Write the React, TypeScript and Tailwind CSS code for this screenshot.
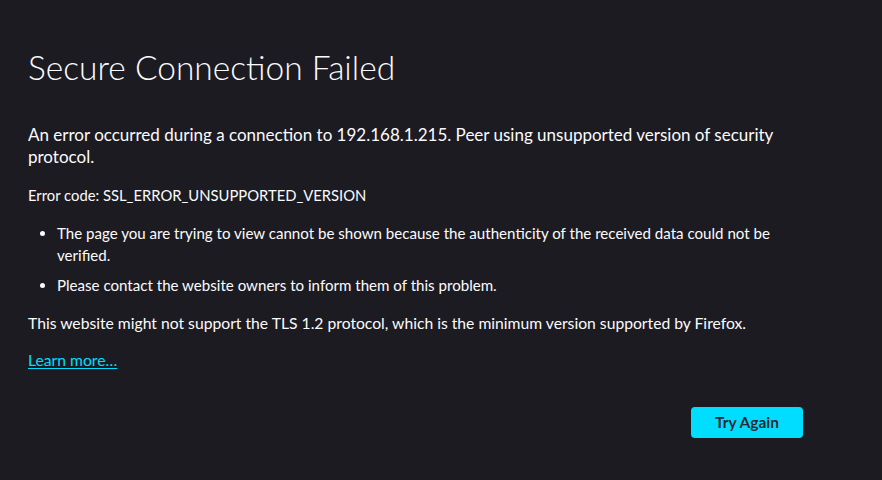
import React from "react";

const font = { fontFamily: "Lato, 'Noto Sans', sans-serif" };

export default function App() {
  return (
    <div className="min-h-screen bg-[#1c1b22] text-[#fbfbfe]" style={font}>
      <div className="ml-[28px] w-[775px] pt-[47px]">
        <h1 className="text-[33.5px] font-light leading-[40px]">Secure Connection Failed</h1>

        <p className="mt-[37px] text-[17px] leading-[22px]">
          An error occurred during a connection to 192.168.1.215. Peer using unsupported version of security
          protocol.
        </p>

        <p className="mt-[16px] text-[14.8px] leading-[22px]">Error code: SSL_ERROR_UNSUPPORTED_VERSION</p>

        <ul className="mt-[16px] list-disc pl-[29px] text-[15.1px] leading-[22px]">
          <li>
            The page you are trying to view cannot be shown because the authenticity of the received data could not
            be verified.
          </li>
          <li className="mt-[8px]">Please contact the website owners to inform them of this problem.</li>
        </ul>

        <p className="mt-[16px] text-[15.7px] leading-[22px]">
          This website might not support the TLS 1.2 protocol, which is the minimum version supported by Firefox.
        </p>

        <p className="mt-[15px] text-[15.7px] leading-[22px]">
          <a href="#" className="text-[#00ddff] underline underline-offset-2">
            Learn more…
          </a>
        </p>

        <div className="mt-[36px] flex justify-end">
          <button className="h-[31px] w-[112px] rounded-[4px] bg-[#00ddff] text-[15.5px] font-bold text-[#2b2a33]">
            Try Again
          </button>
        </div>
      </div>
    </div>
  );
}
